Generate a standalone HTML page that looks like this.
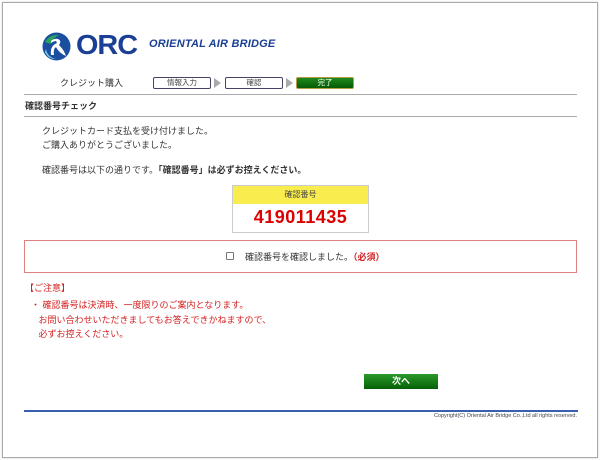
<!DOCTYPE html>
<html><head><meta charset="utf-8"><style>
*{margin:0;padding:0;box-sizing:border-box}
body{width:600px;height:460px;background:#fff;font-family:"Liberation Sans","Noto Sans CJK JP",sans-serif;position:relative;overflow:hidden;color:#333}
.a{position:absolute;white-space:nowrap}
.frame{position:absolute;left:2px;top:2px;width:596px;height:456px;border:1px solid #aaa;box-shadow:0 0 2px #ccc}
.step{position:absolute;top:77px;height:12px;width:58px;border:1px solid #446;border-radius:2px;font-size:7.5px;line-height:10px;text-align:center;color:#444;background:#fff}
.arr{position:absolute;top:78px;width:0;height:0;border-left:7px solid #aaa;border-top:5px solid transparent;border-bottom:5px solid transparent}
.t{font-size:9px;color:#333}
.r{color:#d42020;font-size:9px}
</style></head><body>
<div class="frame"></div>
<svg class="a" style="left:42px;top:32px" width="29" height="29" viewBox="0 0 29 29">
<circle cx="14.5" cy="14.5" r="14" fill="#1a4fa0"/>
<path d="M3 10 Q8 2 17 3 Q10 6 9 12 Z" fill="#2aa35a"/>
<path d="M9 9 Q12 6 16 7 Q20 9 17 13 Q22 18 24 24 Q17 21 14 15 Q11 17 12 23 L9 23 Q8 15 13 12 Q16 11 14 9 Q12 9 9 11Z" fill="#fff"/>
<path d="M4 17 Q5 25 14 27 Q6 27 3 20Z" fill="#7fd0f0"/>
</svg>
<div class="a" style="left:76px;top:29px;font-size:28px;font-weight:bold;color:#1a3f95;letter-spacing:-1px;transform:scaleX(1.03);transform-origin:left">ORC</div>
<div class="a" style="left:149px;top:38px;font-size:11px;font-weight:bold;font-style:italic;color:#1a3f95;letter-spacing:0.2px">ORIENTAL AIR BRIDGE</div>
<div class="a t" style="left:60px;top:76px;font-size:9px">クレジット購入</div>
<div class="step" style="left:153px">情報入力</div>
<div class="arr" style="left:214px"></div>
<div class="step" style="left:225px">確認</div>
<div class="arr" style="left:286px"></div>
<div class="step" style="left:296px;background:linear-gradient(#1d8a1d,#045a04);color:#fff;border-color:#b89a40">完了</div>
<div class="a" style="left:24px;top:94px;width:553px;height:1px;background:#aaa"></div>
<div class="a t" style="left:25px;top:99px;font-weight:bold">確認番号チェック</div>
<div class="a" style="left:24px;top:116px;width:553px;height:1px;background:#aaa"></div>
<div class="a t" style="left:42px;top:124px">クレジットカード支払を受け付けました。</div>
<div class="a t" style="left:42px;top:138px">ご購入ありがとうございました。</div>
<div class="a t" style="left:42px;top:163px">確認番号は以下の通りです。<b>「確認番号」は必ずお控えください。</b></div>
<div class="a" style="left:232px;top:185px;width:137px;height:48px;border:1px solid #ccc">
<div style="height:18px;background:#f8ec4e;font-size:8px;text-align:center;line-height:18px;color:#444">確認番号</div>
<div style="text-align:center;font-size:18px;font-weight:bold;color:#d00;line-height:27px;letter-spacing:0.5px">419011435</div>
</div>
<div class="a" style="left:24px;top:240px;width:553px;height:33px;border:1px solid #e08080"></div>
<div class="a" style="left:226px;top:252px;width:8px;height:8px;border:1px solid #777;border-radius:1px"></div>
<div class="a t" style="left:245px;top:250px">確認番号を確認しました。<span style="color:#d42020;font-weight:bold">（必須）</span></div>
<div class="a r" style="left:25px;top:281px">【ご注意】</div>
<div class="a r" style="left:31px;top:298px;line-height:14.5px">・ 確認番号は決済時、一度限りのご案内となります。<br>&nbsp;&nbsp; お問い合わせいただきましてもお答えできかねますので、<br>&nbsp;&nbsp; 必ずお控えください。</div>
<div class="a" style="left:364px;top:374px;width:74px;height:15px;background:linear-gradient(#2a9a2a,#066006);color:#fff;font-size:9px;font-weight:bold;text-align:center;line-height:15px">次へ</div>
<div class="a" style="left:24px;top:410px;width:554px;height:2px;background:#3a5fb0"></div>
<div class="a" style="right:23px;top:413px;font-size:5.5px;color:#445">Copyright(C) Oriental Air Bridge Co.,Ltd all rights reserved.</div>
</body></html>
